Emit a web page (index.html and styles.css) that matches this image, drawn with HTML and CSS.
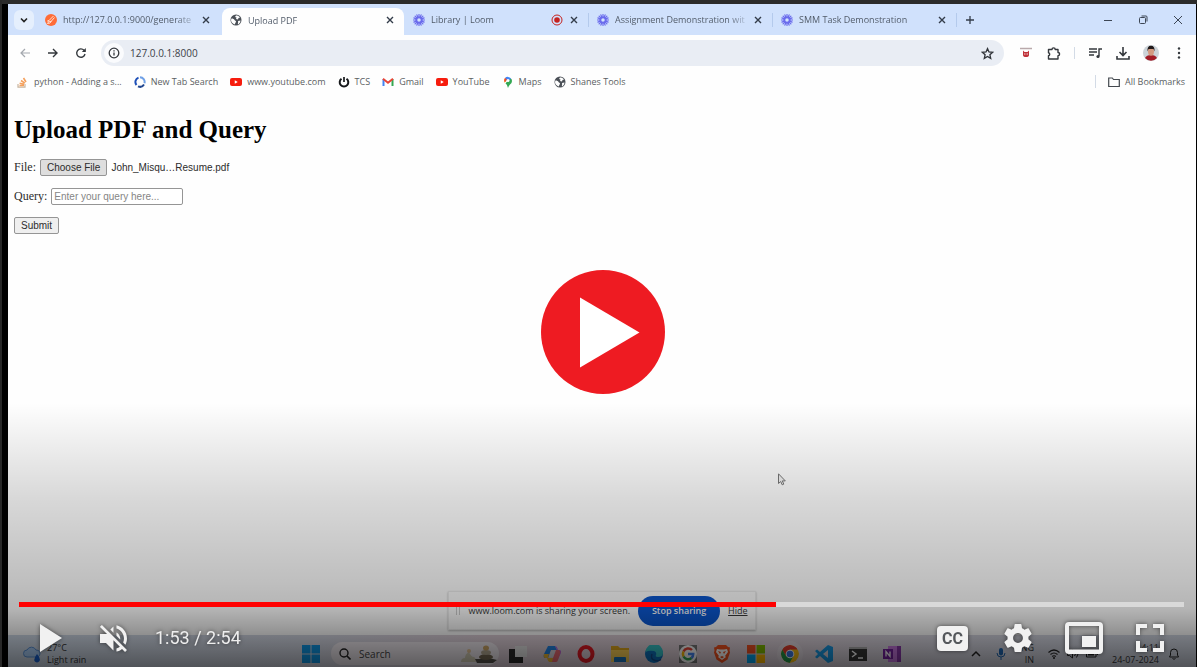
FILE: index.html
```html
<!DOCTYPE html>
<html lang="en">
<head>
<meta charset="utf-8">
<title>Upload PDF</title>
<link rel="stylesheet" href="styles.css">
</head>
<body>
<svg class="defs" aria-hidden="true">
  <symbol id="close" viewBox="0 0 10 10"><path d="M2 2l6 6M8 2l-6 6" stroke="#333c4a" stroke-width="1.4"/></symbol>
  <symbol id="globe" viewBox="0 0 24 24"><circle cx="12" cy="12" r="11" fill="#4b5057"/><path d="M3 9c3 0 5 1 6 3s3 1 3 3-2 2-2 6c-5-1-8-5-8-9zM12 3c3 0 6 1 8 4l-3 1-1 3-4-1 1-3-3-1zM16 14l5-1c0 3-2 6-5 8-1-2 1-4 0-7z" fill="#fff"/></symbol>
  <symbol id="loom" viewBox="0 0 24 24"><g stroke="#6a6bec" stroke-width="2.400" stroke-linecap="round"><path d="M12 1v22M1 12h22M4.200 4.200l15.600 15.600M19.800 4.200L4.200 19.800M7.800 1.800l8.400 20.400M16.200 1.800L7.800 22.200M1.800 7.800l20.400 8.400M1.800 16.200l20.400-8.400"/></g><circle cx="12" cy="12" r="5" fill="#d3e3fd" stroke="#6a6bec" stroke-width="3"/></symbol>
  <symbol id="tube" viewBox="0 0 24 16"><rect width="24" height="16" rx="4" fill="#f61c0d"/><path d="M9.500 4.500v7l6-3.500z" fill="#fff"/></symbol>
</svg>

<main class="player">
  <div class="screen">
    <nav class="tabs" aria-label="Tabs">
      <button class="tab-search" aria-label="Search tabs"><svg viewBox="0 0 10 10"><path d="M2 3.500l3 3 3-3" fill="none" stroke="#222" stroke-width="1.600"/></svg></button>
      <div class="tab">
        <svg class="fav" viewBox="0 0 24 24"><circle cx="12" cy="12" r="12" fill="#ff6c37"/><path d="M17 4l-9 9-3 1 7 1 7-8M7 16l-2 3 5-1 3-4" fill="none" stroke="#ffe0d2" stroke-width="2"/></svg>
        <span class="tab-title">http://127.0.0.1:9000/generate</span>
        <button class="tab-close" aria-label="Close tab"><svg><use href="#close"/></svg></button>
      </div>
      <div class="tab active">
        <svg class="fav"><use href="#globe"/></svg>
        <span class="tab-title">Upload PDF</span>
        <button class="tab-close" aria-label="Close tab"><svg><use href="#close"/></svg></button>
      </div>
      <div class="tab divided">
        <svg class="fav"><use href="#loom"/></svg>
        <span class="tab-title">Library | Loom</span>
        <svg class="record" viewBox="0 0 12 12"><circle cx="6" cy="6" r="5" fill="none" stroke="#c5221f"/><circle cx="6" cy="6" r="2.800" fill="#c5221f"/></svg>
        <button class="tab-close" aria-label="Close tab"><svg><use href="#close"/></svg></button>
      </div>
      <div class="tab divided">
        <svg class="fav"><use href="#loom"/></svg>
        <span class="tab-title">Assignment Demonstration wit</span>
        <button class="tab-close" aria-label="Close tab"><svg><use href="#close"/></svg></button>
      </div>
      <div class="tab divided">
        <svg class="fav"><use href="#loom"/></svg>
        <span class="tab-title">SMM Task Demonstration</span>
        <button class="tab-close" aria-label="Close tab"><svg><use href="#close"/></svg></button>
      </div>
      <button class="new-tab" aria-label="New tab"><svg viewBox="0 0 10 10"><path d="M5 1v8M1 5h8" stroke="#333c4a" stroke-width="1.300"/></svg></button>
      <div class="window-buttons">
        <button aria-label="Minimize"><svg viewBox="0 0 10 10"><path d="M1 5.500h8" stroke="#3d4654"/></svg></button>
        <button aria-label="Restore"><svg viewBox="0 0 10 10"><path d="M1.500 3.500a1 1 0 0 1 1-1h4a1 1 0 0 1 1 1v4a1 1 0 0 1-1 1h-4a1 1 0 0 1-1-1zM3.500 1h4.500q1 0 1 1v4.500" fill="none" stroke="#3d4654"/></svg></button>
        <button aria-label="Close"><svg viewBox="0 0 10 10"><path d="M1 1l8 8M9 1l-8 8" stroke="#3d4654"/></svg></button>
      </div>
    </nav>

    <div class="toolbar">
      <div class="nav-buttons">
        <button aria-label="Back"><svg viewBox="0 0 12 12"><path d="M11 6H2M6 2L2 6l4 4" fill="none" stroke="#a4a8ae" stroke-width="1.200"/></svg></button>
        <button aria-label="Forward"><svg viewBox="0 0 12 12"><path d="M1 6h9M6 2l4 4-4 4" fill="none" stroke="#34383d" stroke-width="1.400"/></svg></button>
        <button aria-label="Reload"><svg viewBox="0 0 12 12"><path d="M10 7A4.200 4.200 0 1 1 9 3.200L10 4.300" fill="none" stroke="#34383d" stroke-width="1.400"/><path d="M10.800 1v4h-4z" fill="#34383d"/></svg></button>
      </div>
      <div class="omnibox">
        <button class="site-info" aria-label="Site information"><svg viewBox="0 0 12 12"><circle cx="6" cy="6" r="4.800" fill="none" stroke="#34383d" stroke-width="1.300"/><path d="M6 5.400v3M6 3.200v1.300" stroke="#34383d" stroke-width="1.300"/></svg></button>
        <input class="address" type="text" value="127.0.0.1:8000" aria-label="Address">
        <button class="star" aria-label="Bookmark this page"><svg viewBox="0 0 24 24"><path d="M12 3l2.700 6.200 6.700.600-5 4.500 1.500 6.600-5.900-3.500-5.900 3.500 1.500-6.600-5-4.500 6.700-.600z" fill="none" stroke="#2f3338" stroke-width="2.400"/></svg></button>
      </div>
      <div class="actions">
        <button aria-label="Extension"><svg viewBox="0 0 14 14"><path d="M1 2.500h12" stroke="#b9a9ab" stroke-width="1.500"/><path d="M4 4.500l1.500 1.500h3L10 4.500V9q0 2-3 2t-3-2z" fill="#c0323a"/><path d="M5.200 8h1.200M7.600 8h1.200" stroke="#fff" stroke-width="1.200"/></svg></button>
        <button aria-label="Extensions"><svg viewBox="0 0 14 14"><path d="M1.500 3.500h3.500a1.600 1.600 0 0 1 3.200 0H11v3a1.600 1.600 0 0 1 0 3.200V13H1.500V9.800a1.600 1.600 0 0 0 0-3.100z" fill="none" stroke="#34383d" stroke-width="1.400" stroke-linejoin="round"/></svg></button>
        <i class="rule"></i>
        <button aria-label="Media controls"><svg viewBox="0 0 14 14"><path d="M1 3h8M1 6h8M1 9h5M11 10V3h3" fill="none" stroke="#34383d" stroke-width="1.400"/><circle cx="10" cy="10.500" r="1.600" fill="#34383d"/></svg></button>
        <button aria-label="Downloads"><svg viewBox="0 0 14 14"><path d="M7 1v8M3.500 6L7 9.500 10.500 6M1 10v3h12v-3" fill="none" stroke="#34383d" stroke-width="1.600"/></svg></button>
        <button aria-label="Profile"><svg class="avatar" viewBox="0 0 16 16"><circle cx="8" cy="8" r="8" fill="#ccd3d8"/><path d="M2 13q1.500-3 6-3t6 3A8 8 0 0 1 2 13z" fill="#a31c26"/><ellipse cx="8" cy="6.500" rx="3" ry="4.200" fill="#d49a80"/><path d="M4.500 6.500Q4 .800 8 .800t3.500 5.700L10.500 4h-5z" fill="#21191a"/></svg></button>
        <button aria-label="Menu"><svg viewBox="0 0 14 14"><g fill="#34383d"><circle cx="7" cy="2.500" r="1.200"/><circle cx="7" cy="7" r="1.200"/><circle cx="7" cy="11.500" r="1.200"/></g></svg></button>
      </div>
    </div>

    <nav class="bookmarks" aria-label="Bookmarks">
      <a href="#"><svg viewBox="0 0 12 12"><path d="M1 8v3.200h7V8" fill="none" stroke="#c8b59f" stroke-width="1.200"/><path d="M2.500 9.500H7M2.600 7.200l4.500 1M4 4.500l3.800 2.600M6.500 2l2.500 4" stroke="#f4a05c" stroke-width="1.600"/></svg>python - Adding a s...</a>
      <a href="#"><svg viewBox="0 0 12 12"><g fill="none" stroke-width="2"><path d="M2.500 9A4.700 4.700 0 0 1 4.500 1.600" stroke="#1d4fb8"/><path d="M6 1.200a4.800 4.800 0 0 1 4.500 6" stroke="#6fa0e6"/><path d="M10 8.500a4.700 4.700 0 0 1-6 1.800" stroke="#21468f"/></g></svg>New Tab Search</a>
      <a href="#"><svg><use href="#tube"/></svg>www.youtube.com</a>
      <a href="#"><svg viewBox="0 0 12 12"><path d="M3.500 2.800a4.300 4.300 0 1 0 5 0" fill="none" stroke="#16181b" stroke-width="2"/><path d="M6 1v5" stroke="#16181b" stroke-width="1.700"/></svg>TCS</a>
      <a href="#"><svg viewBox="0 0 12 12"><path d="M1.500 10V3" stroke="#4285f4" stroke-width="2"/><path d="M10.500 10V3" stroke="#34a853" stroke-width="2"/><path d="M1 2.800l5 4 5-4" fill="none" stroke="#ea4335" stroke-width="2"/></svg>Gmail</a>
      <a href="#"><svg><use href="#tube"/></svg>YouTube</a>
      <a href="#"><svg viewBox="0 0 12 12"><path d="M6 12Q5.600 9 3.500 7.300L8.500 2.200Q10 3 10 5 10 7 8 8.500 6.500 10 6 12z" fill="#34a853"/><path d="M2.600 6.400A4 4 0 0 1 3 2l2.300 1.900z" fill="#fbbc04"/><path d="M3 2a4 4 0 0 1 6 .500L5.500 6z" fill="#4285f4"/><path d="M3 1.900l2 1.700-2.300 2.800a4 4 0 0 1 .300-4.500" fill="#ea4335"/><circle cx="6" cy="4.500" r="1.500" fill="#fff"/></svg>Maps</a>
      <a href="#"><svg><use href="#globe"/></svg>Shanes Tools</a>
      <a class="all" href="#"><svg viewBox="0 0 12 12"><path d="M.700 2h3.600l1.200 1.500h5.800v7H.700z" fill="none" stroke="#44494f" stroke-width="1.200"/></svg>All Bookmarks</a>
    </nav>

    <form class="page">
      <h1>Upload PDF and Query</h1>
      <div class="field"><label for="file">File:</label> <button id="file" class="native pressed" type="button">Choose File</button> <output for="file">John_Misqu…Resume.pdf</output></div>
      <div class="field"><label for="query">Query:</label> <input id="query" type="text" placeholder="Enter your query here..."></div>
      <div class="field"><button class="native" type="button">Submit</button></div>
    </form>

    <div class="sharing">
      <i class="grip"></i>
      <span>www.loom.com is sharing your screen.</span>
      <button class="stop">Stop sharing</button>
      <a href="#">Hide</a>
    </div>

    <footer class="taskbar">
      <div class="weather">
        <svg viewBox="0 0 18 18"><path d="M4 12a3.500 3.500 0 0 1 0-7 5 5 0 0 1 9 0 3.500 3.500 0 0 1 1 7z" fill="#a9cdf6" stroke="#5b93d8"/><path d="M14 9q4 4.500 2.500 7a2.900 2.900 0 0 1-5 0q-1-2.500 2.500-7z" fill="#1762d4"/></svg>
        <span>27°C<br>Light rain</span>
      </div>
      <div class="apps">
        <svg viewBox="0 0 18 18"><path d="M0 0h8.500v8.500H0zM9.500 0H18v8.500H9.500zM0 9.500h8.500V18H0zM9.500 9.500H18V18H9.500z" fill="#109aea"/></svg>
        <label class="search">
          <svg viewBox="0 0 12 12"><circle cx="5" cy="5" r="4" fill="none" stroke="#222" stroke-width="1.400"/><path d="M8 8l3.500 3.500" stroke="#222" stroke-width="1.600"/></svg>
          <input type="text" placeholder="Search" aria-label="Search">
          <svg class="stones" viewBox="0 0 36 20"><path d="M0 18q0-4 4-4 0-4 4-6 2 5 5 5 2 1 2 5z" fill="#d6d0b8"/><path d="M14 15h18l4 1-4 3H16z" fill="#55524b"/><ellipse cx="25" cy="13" rx="7" ry="3" fill="#776b55"/><ellipse cx="25" cy="8.500" rx="5" ry="2.500" fill="#b5ab93"/><ellipse cx="25" cy="4" rx="3" ry="2.500" fill="#d0a968"/><circle cx="8" cy="7" r="2" fill="#e7c79a"/></svg>
        </label>
        <svg viewBox="0 0 18 18"><path d="M6 1h12v11H6z" fill="#e6e6e6"/><path d="M0 4h6v8h8v6H0z" fill="#292929"/></svg>
        <svg viewBox="0 0 18 18"><path d="M5 1h7l2 4H8L5 13H2Q0 13 1 9z" fill="#2285e5"/><path d="M12 1q2 0 3 4h2q2 1 0 5l-2 4h-3l2-9z" fill="#b365ea"/><path d="M13 17H7l-2-4h5l3-8h3q2 1 1 4l-2 6q-.500 2-2 2z" fill="#ef6c75"/><path d="M1 9h5l-1 4h5l-1 4H7q-2 0-3-4H2q-2-1-1-4z" fill="#efb932"/><path d="M8 6h4l-2 6H6z" fill="#d9d9e2"/></svg>
        <svg viewBox="0 0 18 18"><ellipse cx="9" cy="9" rx="6.500" ry="7" fill="none" stroke="#e61924" stroke-width="4"/></svg>
        <svg viewBox="0 0 18 18"><path d="M0 1h7l2 2h9v14H0z" fill="#e3a91b"/><path d="M0 5h18v12H0z" fill="#ffd255"/><path d="M3 17v-4q0-1 1-1h10q1 0 1 1v4z" fill="#1a73bd"/></svg>
        <svg viewBox="0 0 18 18"><circle cx="9" cy="9" r="9" fill="#0e72bd"/><path d="M.500 7A8.700 8.700 0 0 1 18 8q0 4-5 4-3 0-2-2 1-3-2-4-5-1-8.500 1z" fill="#36c5c9"/><path d="M7 9q-2 5 3 6.500 3 1 6-1" fill="none" stroke="#124d91" stroke-width="1.500"/></svg>
        <svg viewBox="0 0 18 18"><path d="M0 0h18v18H0z" fill="#777"/><circle cx="9" cy="9" r="9" fill="#fff"/><g fill="none" stroke-width="2.500"><path d="M4.500 6.500A5.200 5.200 0 0 1 13 5" stroke="#ea4335"/><path d="M4.500 6.500a5.500 5.500 0 0 0 0 5" stroke="#fbbc05"/><path d="M4.500 11.500a5.200 5.200 0 0 0 8 1.500" stroke="#34a853"/><path d="M9 9h5.200q0 2.500-1.700 4" stroke="#4285f4"/></g></svg>
        <svg viewBox="0 0 18 18"><path d="M5 0h8l2 2 2 .500-.500 3 .500 2-2.500 7L9 18l-5.500-3.500L1 7.500l.500-2L1 2.500 3 2z" fill="#f4511e"/><path d="M4 4l3 .500h4L14 4l1 3-3 4 1 1-4 3-4-3 1-1-3-4z" fill="#fff"/><path d="M5 6l3 1-1 2zM13 6l-3 1 1 2zM7 12l2-1 2 1-2 1.500z" fill="#f4511e"/></svg>
        <svg viewBox="0 0 18 18"><path d="M0 0h8.500v8.500H0z" fill="#f25022"/><path d="M9.500 0H18v8.500H9.500z" fill="#7fba00"/><path d="M0 9.500h8.500V18H0z" fill="#00a4ef"/><path d="M9.500 9.500H18V18H9.500z" fill="#ffb900"/></svg>
        <svg class="running" viewBox="0 0 18 18"><circle cx="9" cy="9" r="9" fill="#fbc116"/><path d="M1.200 4.500a9 9 0 0 1 15.600 0H9L5 11z" fill="#e33b2e"/><path d="M1.200 4.500A9 9 0 0 0 8.500 18l4-7H5z" fill="#23994b"/><circle cx="9" cy="9" r="4.300" fill="#fff"/><circle cx="9" cy="9" r="3.300" fill="#3978e6"/></svg>
        <svg viewBox="0 0 18 18"><path d="M13 0l5 2v14l-5 2-8-7-3 2.500L0 12l3-3-3-3 2-1.500L5 7zM13 5L8 9l5 4z" fill="#189ae5" fill-rule="evenodd"/></svg>
        <svg viewBox="0 0 18 18"><path d="M0 2h18v14H0z" fill="#343434"/><path d="M0 2h18v2H0z" fill="#ababab"/><path d="M3 6l4 3-4 3M9 13h5" fill="none" stroke="#fff" stroke-width="1.500"/></svg>
        <svg viewBox="0 0 18 18"><path d="M5 1h13v16H5z" fill="#c777df"/><path d="M14 1h4v16h-4z" fill="#8938aa"/><path d="M0 4h10v10H0z" fill="#7622a0"/><path d="M3 11.500v-5l4 5v-5" fill="none" stroke="#fff" stroke-width="1.300"/></svg>
      </div>
      <div class="tray">
        <svg viewBox="0 0 12 12"><path d="M2 8l4-4 4 4" fill="none" stroke="#222" stroke-width="1.500"/></svg>
        <svg viewBox="0 0 12 12"><rect x="4" width="4" height="7.500" rx="2" fill="#1e66b1"/><path d="M2 5q0 4 4 4t4-4M6 9v3" fill="none" stroke="#1e66b1"/></svg>
        <span class="lang">ENG<br>IN</span>
        <div class="status">
          <svg viewBox="0 0 12 12"><path d="M.500 4.500q5.500-5 11 0M2.500 6.500q3.500-3 7 0M4.200 8.500q1.800-1.500 3.600 0" fill="none" stroke="#222" stroke-width="1.200"/><circle cx="6" cy="10" r="1" fill="#222"/></svg>
          <svg viewBox="0 0 12 12"><path d="M.500 4.500h2L5.500 2v8L2.500 7.500h-2zM7.500 4q2 2 0 4M9.500 2.500q3 3.500 0 7" fill="none" stroke="#222"/></svg>
          <svg viewBox="0 0 12 12"><path d="M.500 3h9.500v6H.500zM11.500 5v2" fill="none" stroke="#222"/><path d="M2 4.500h6v3H2z" fill="#222"/></svg>
        </div>
        <span class="clock">14:11<br>24-07-2024</span>
        <svg viewBox="0 0 12 12"><path d="M1.500 9h9L9.500 7V4.500Q9.500 1 6 1T2.500 4.500V7zM4.500 10.500q1.500 1.500 3 0" fill="none" stroke="#222"/></svg>
      </div>
    </footer>

    <svg class="cursor" viewBox="0 0 8 13"><path d="M.500.800v9.700l2.200-2 1.500 3.300 1.600-.700-1.500-3.200h3z" fill="#f4f4f4" stroke="#777"/></svg>
  </div>

  <div class="shade"></div>
  <button class="big-play" aria-label="Play video"><svg viewBox="0 0 124 124"><circle cx="62" cy="62" r="62" fill="#ee1b22"/><path d="M39 27.500v70l59.500-35z" fill="#fff"/></svg></button>

  <div class="controls">
    <input class="seek" type="range" min="0" max="174" value="113" aria-label="Seek">
    <div class="control-row">
      <button class="play" aria-label="Play"><svg viewBox="0 0 22 28"><path d="M0 0v28l22-14z"/></svg></button>
      <button class="mute" aria-label="Unmute"><svg viewBox="8 9 18 18"><path d="m21.480 17.980c0-1.770-1.020-3.290-2.500-4.030v2.210l2.450 2.450c.030-.200.050-.410.050-.630zm2.500 0c0 .940-.200 1.820-.540 2.640l1.510 1.510c.660-1.240 1.030-2.650 1.030-4.150 0-4.280-2.990-7.860-7-8.760v2.050c2.890.860 5 3.540 5 6.710zM9.250 8.980l-1.270 1.260 4.720 4.730H7.980v6h4l5 5v-6.730l4.250 4.250c-.670.520-1.420.930-2.250 1.180v2.060c1.380-.310 2.630-.950 3.690-1.810l2.040 2.050 1.270-1.270-9-9zm7.730.990l-2.090 2.080 2.090 2.090z"/></svg></button>
      <span class="time">1:53 / 2:54</span>
      <button class="captions" aria-label="Captions">CC</button>
      <button class="settings" aria-label="Settings"><svg viewBox="10 10 16 16"><path d="m23.940 18.780c.030-.250.050-.510.050-.780 0-.270-.020-.520-.050-.780l1.680-1.320c.150-.120.190-.330.090-.510l-1.600-2.760c-.090-.170-.310-.240-.480-.170l-1.990.800c-.410-.320-.860-.580-1.350-.780l-.300-2.120c-.020-.190-.190-.330-.390-.330l-3.200 0c-.200 0-.360.140-.390.330l-.300 2.120c-.480.200-.930.470-1.350.780l-1.990-.800c-.180-.070-.390 0-.480.170l-1.600 2.760c-.100.170-.050.390.090.510l1.680 1.320c-.030.250-.050.520-.050.780 0 .260.020.520.050.780l-1.680 1.320c-.150.120-.190.330-.090.510l1.600 2.760c.090.170.310.240.480.170l1.990-.800c.410.320.860.580 1.350.780l.300 2.120c.020.190.190.330.390.330l3.200 0c.200 0 .360-.140.390-.330l.300-2.120c.480-.200.930-.470 1.350-.780l1.990.800c.180.070.390 0 .480-.170l1.600-2.760c.090-.170.050-.390-.090-.510zm-5.940 2.010c-1.540 0-2.800-1.250-2.800-2.800 0-1.540 1.250-2.800 2.800-2.800 1.540 0 2.800 1.250 2.800 2.800 0 1.540-1.250 2.800-2.800 2.800z"/></svg></button>
      <button class="mini" aria-label="Miniplayer"><svg viewBox="0 0 38 32"><path fill-rule="evenodd" d="M4 0h30q4 0 4 4v24q0 4-4 4H4q-4 0-4-4V4q0-4 4-4zM4 4v23.500h30V4zM17 14h14v11H17z"/></svg></button>
      <button class="full" aria-label="Full screen"><svg viewBox="0 0 28 28"><path d="M0 0h11v4H4v7H0zM17 0h11v11h-4V4h-7zM0 17h4v7h7v4H0zM24 17h4v11H17v-4h7z"/></svg></button>
    </div>
  </div>
</main>
</body>
</html>
```

FILE: styles.css
```css
* { box-sizing: border-box; }
body {
  margin: 0;
  background: #282828;
  font-family: "Open Sans", "Noto Sans", sans-serif;
}
button { padding: 0; border: 0; background: none; color: inherit; font: inherit; }
input { font: inherit; }
svg { display: block; flex: none; }
a { color: inherit; text-decoration: none; }
.defs { position: absolute; width: 0; height: 0; }

.player {
  position: relative;
  display: flex;
  height: 100vh;
  padding: 4px 1px 0 6px;
  border-left: 2px solid #282828;
  background: linear-gradient(#2b2b2b 4px, #000 4px);
  overflow: hidden;
}
.screen {
  position: relative;
  display: flex;
  flex: 1;
  flex-direction: column;
  min-width: 0;
  background: #fefefe;
}

/* Browser tabs */
.tabs {
  display: flex;
  align-items: center;
  height: 31px;
  padding-left: 6px;
  background: #d0e1fc;
  color: #525c6a;
  font-size: 9px;
}
.tab-search {
  display: grid;
  place-items: center;
  width: 20px;
  height: 20px;
  margin-right: 3px;
  border-radius: 6px;
  background: #e5effd;
}
.tab-search svg, .tab-close svg, .window-buttons svg, .new-tab svg { width: 10px; height: 10px; }
.tab {
  position: relative;
  display: flex;
  flex: 0 1 184px;
  align-items: center;
  gap: 6px;
  min-width: 0;
  height: 27px;
  padding: 0 10px 0 8px;
}
.tab.active {
  align-self: flex-end;
  flex-basis: 182px;
  margin: 0 1px;
  padding: 0 9px 3px 8px;
  border-radius: 8px 8px 0 0;
  background: #fefefe;
}
.tab.divided { height: 14px; padding-right: 9px; border-right: 1px solid #b4caec; }
.fav { width: 12px; height: 12px; }
.tab-title {
  flex: 1;
  min-width: 0;
  white-space: nowrap;
  mask-image: linear-gradient(90deg, #000 85%, #0003);
}
.record { width: 12px; height: 12px; }
.new-tab { margin-left: 8px; }
.window-buttons { display: flex; gap: 25px; margin-left: auto; padding-right: 13px; }

/* Address bar */
.toolbar { display: flex; align-items: center; height: 36px; }
.nav-buttons { display: flex; gap: 16px; padding: 0 14px 0 11px; }
.nav-buttons svg { width: 12px; height: 12px; }
.omnibox {
  display: flex;
  flex: 1;
  align-items: center;
  min-width: 0;
  height: 26px;
  padding: 0 10px 0 3px;
  border-radius: 13px;
  background: #e9edf4;
}
.site-info {
  display: grid;
  place-items: center;
  width: 20px;
  height: 20px;
  border-radius: 50%;
  background: #fafbfd;
}
.site-info svg { width: 12px; height: 12px; }
.address {
  flex: 1;
  min-width: 0;
  padding: 0 6px;
  border: 0;
  background: none;
  color: #3c4148;
  font-size: 10px;
}
.star svg { width: 13px; height: 13px; }
.actions { display: flex; align-items: center; gap: 14px; padding: 0 10px 0 15px; }
.actions svg { width: 14px; height: 14px; }
.actions .avatar { width: 16px; height: 16px; margin: 0 -1px; }
.rule { width: 1px; height: 12px; margin: 0 -1px; background: #d3dbe6; }

/* Bookmarks */
.bookmarks {
  display: flex;
  align-items: center;
  gap: 12px;
  height: 21px;
  padding: 0 11px 0 9px;
  color: #5b5e63;
  font-size: 9px;
  white-space: nowrap;
}
.bookmarks a { display: flex; align-items: center; gap: 5px; }
.bookmarks svg { width: 12px; height: 12px; }
.bookmarks .all {
  margin-left: auto;
  padding-left: 12px;
  border-left: 1px solid #d3dbe6;
}

/* Upload form */
.page {
  flex: 1;
  padding: 24px 6px 0;
  color: #2c2c2c;
  font: 12px "Liberation Serif", serif;
}
.page h1 { margin: 0 0 15px; color: #000; font-size: 25px; line-height: 28px; }
.field { display: flex; align-items: center; gap: 4px; height: 17px; margin-bottom: 12px; }
.page button, .page input, .page output { font: 10px "Liberation Sans", sans-serif; }
.native {
  height: 17px;
  padding: 0 6px;
  border: 1px solid #959595;
  border-radius: 2px;
  background: #efefef;
}
.native.pressed { background: #dedede; }
.page input {
  width: 132px;
  height: 17px;
  padding: 0 2px;
  border: 1px solid #959595;
  border-radius: 2px;
  background: #fff;
}
.page input::placeholder { color: #858585; }

/* Screen sharing notice */
.sharing {
  display: flex;
  align-self: center;
  align-items: center;
  gap: 8px;
  height: 39px;
  margin-bottom: 5px;
  padding: 0 7px;
  border: 1px solid #eee;
  background: #fff;
  box-shadow: 0 1px 2px #0004;
  color: #3a3a3a;
  font-size: 9px;
}
.grip { width: 4px; height: 8px; border: solid #ccc; border-width: 0 1px; }
.stop {
  width: 82px;
  height: 30px;
  border-radius: 15px;
  background: #0b57d0;
  color: #fff;
  font-weight: 600;
}
.sharing a { text-decoration: underline; }

/* Taskbar */
.taskbar {
  display: grid;
  grid-template-columns: 1fr auto 1fr;
  align-items: center;
  height: 32px;
  padding: 5px 16px 0 15px;
  background: linear-gradient(90deg, #cfdae8, #d3d7e3 25%, #decfd8 40%, #dfd0d8 60%, #d8d8e3 80%, #d3d9e5);
  color: #333;
  font-size: 9px;
  line-height: 12px;
}
.weather { display: flex; align-items: center; gap: 6px; }
.weather svg { width: 18px; height: 18px; }
.apps { display: flex; align-items: center; gap: 16px; }
.apps > svg { width: 18px; height: 18px; }
.apps .running { border-radius: 50%; box-shadow: 0 0 0 4px #fff3; }
.search {
  display: flex;
  align-items: center;
  gap: 8px;
  width: 168px;
  height: 23px;
  margin: 0 -6px 0 -5px;
  padding: 0 2px 0 8px;
  border-radius: 12px;
  background: #f1ebf1;
}
.search input { flex: 1; min-width: 0; padding: 0; border: 0; background: none; font-size: 10px; }
.search input::placeholder { color: #444; }
.search svg { width: 12px; height: 12px; }
.search .stones { width: 36px; height: 20px; }
.tray { display: flex; align-items: center; justify-content: flex-end; gap: 9px; }
.tray svg { width: 12px; height: 12px; }
.tray > svg:first-child { margin-right: 4px; }
.lang, .clock { text-align: right; }
.status { display: flex; gap: 7px; margin: 0 5px; }

.cursor { position: absolute; left: 770px; top: 469px; width: 8px; height: 13px; }

/* Player overlay */
.shade {
  position: absolute;
  inset: auto 1px 0 6px;
  height: 264px;
  background: linear-gradient(#0000, #00000026 36%, #0000003f 67%, #0000004a 78%, #0000006c 87%, #0000009c);
  pointer-events: none;
}
.big-play { position: absolute; left: calc(50% + 3px); top: 270px; translate: -50% 0; }
.big-play svg { width: 124px; height: 124px; }
.controls {
  position: absolute;
  inset: auto 1px 0 6px;
  padding: 0 12px 12px 11px;
  color: #eee;
}
.seek {
  display: block;
  width: 100%;
  height: 5px;
  margin: 0 0 14px;
  appearance: none;
  background: linear-gradient(90deg, #f00 65%, #d9d9d9 65%);
}
.seek::-webkit-slider-thumb { appearance: none; width: 0; height: 0; }
.control-row {
  display: flex;
  align-items: center;
  height: 34px;
  padding: 0 20px 0 21px;
  filter: drop-shadow(0 0 2px #0008);
}
.control-row svg { width: 28px; height: 28px; fill: #f1f1f1; }
.control-row .play svg { width: 22px; }
.mute { margin: 0 28px 0 38px; }
.control-row .mute svg { width: 27px; height: 27px; }
.time { margin-right: auto; font: 18px/24px Roboto, sans-serif; }
.control-row .captions {
  width: 31px;
  height: 25px;
  border-radius: 4px;
  background: #f1f1f1;
  color: #55585c;
  font: bold 16px/25px Roboto, sans-serif;
}
.settings { margin: 0 33px 0 36px; }
.mini { margin-right: 33px; }
.control-row .mini svg { width: 38px; height: 32px; }
```
